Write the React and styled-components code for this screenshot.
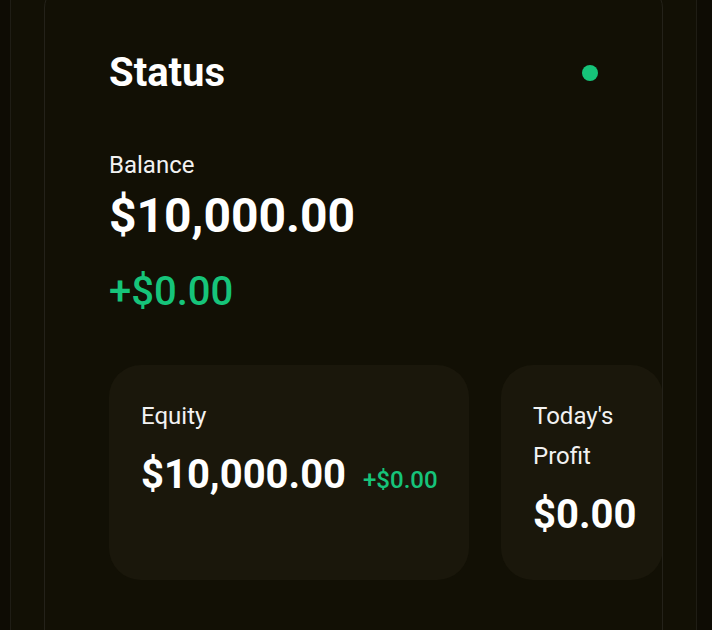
import React from 'react'
import styled, { createGlobalStyle } from 'styled-components'

const GlobalStyle = createGlobalStyle`
  html, body {
    margin: 0;
    background: #0e0c04;
  }
  body {
    font-family: Roboto, "Liberation Sans", sans-serif;
    color: #fff;
    overflow: hidden;
  }
`

const Frame = styled.div`
  margin-left: 10px;
  width: 687px;
  min-height: 630px;
  box-sizing: border-box;
  border-left: 1px solid #1f1d15;
  border-right: 1px solid #1f1d15;
  background: #121005;
  padding: 0 33px;
`

const Panel = styled.section`
  margin-top: -16px;
  border: 1px solid #24221a;
  border-radius: 24px;
  padding: 64px;
  overflow: hidden;
`

const Header = styled.div`
  display: flex;
  align-items: center;
  justify-content: space-between;
`

const Title = styled.h2`
  margin: 0;
  font-size: 40px;
  line-height: 48px;
  font-weight: 700;
`

const Dot = styled.span`
  width: 16px;
  height: 16px;
  border-radius: 50%;
  background: #16c47a;
`

const Balance = styled.div`
  margin-top: 50px;
  display: flex;
  flex-direction: column;
`

const Label = styled.div`
  font-size: 24px;
  line-height: ${p => p.$lh || '36px'};
  color: #f2f2f2;
`

const Amount = styled.div`
  font-size: ${p => p.$size}px;
  line-height: 1.2;
  font-weight: 700;
  margin-top: ${p => p.$gap || 0}px;
`

const Change = styled.div`
  font-size: ${p => p.$size}px;
  line-height: 1.2;
  font-weight: 500;
  color: #16c47a;
  margin-top: ${p => p.$gap || 0}px;
`

const Cards = styled.div`
  margin-top: 49px;
  display: grid;
  grid-template-columns: 360px 162px;
  gap: 32px;
`

const StatCard = styled.div`
  background: #1a170b;
  border-radius: 32px;
  padding: 31px 32px 32px;
  min-height: 215px;
  box-sizing: border-box;
`

const ValueRow = styled.div`
  margin-top: 15px;
  display: flex;
  align-items: baseline;
  gap: 17px;
`

const NextHeading = styled.h3`
  margin: 48px 0 0;
  font-size: 36px;
  line-height: 1.2;
  font-weight: 700;
`

export default function App() {
  return (
    <>
      <GlobalStyle />
      <Frame>
        <Panel>
          <Header>
            <Title>Status</Title>
            <Dot />
          </Header>
          <Balance>
            <Label>Balance</Label>
            <Amount $size={48} $gap={4}>$10,000.00</Amount>
            <Change $size={40} $gap={23}>+$0.00</Change>
          </Balance>
          <Cards>
            <StatCard>
              <Label $lh="40px">Equity</Label>
              <ValueRow>
                <Amount $size={40}>$10,000.00</Amount>
                <Change $size={24}>+$0.00</Change>
              </ValueRow>
            </StatCard>
            <StatCard>
              <Label $lh="40px">Today's Profit</Label>
              <ValueRow>
                <Amount $size={40}>$0.00</Amount>
              </ValueRow>
            </StatCard>
          </Cards>
          <NextHeading>Open Orders</NextHeading>
        </Panel>
      </Frame>
    </>
  )
}
